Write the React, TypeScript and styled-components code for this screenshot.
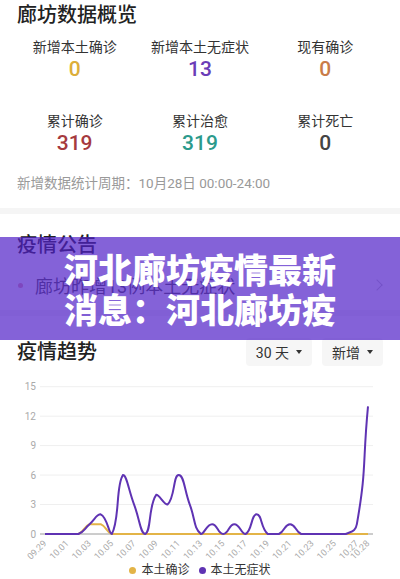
import React from 'react';
import styled, { createGlobalStyle } from 'styled-components';

const GlobalStyle = createGlobalStyle`
  html, body { margin: 0; padding: 0; background: #fff; }
  body {
    font-family: Roboto, "Noto Sans CJK SC", sans-serif;
    color: #222;
    width: 400px;
    height: 579px;
    overflow: hidden;
  }
  * { box-sizing: border-box; }
`;

const Page = styled.div`
  position: relative;
  width: 400px;
  height: 579px;
  overflow: hidden;
  background: #fff;
`;

const Section = styled.section<{ $pt?: number; $pb?: number }>`
  padding: ${(p) => p.$pt ?? 0}px 17px ${(p) => p.$pb ?? 0}px;
`;

const SectionTitle = styled.h2`
  margin: 0;
  font-size: 20px;
  line-height: 31px;
  font-weight: 500;
  color: #222;
`;

const StatsGrid = styled.div`
  margin: 7px -5px 0;
  display: grid;
  grid-template-columns: repeat(3, 1fr);
  row-gap: 30px;
`;

const StatCell = styled.div`
  display: flex;
  flex-direction: column;
  align-items: center;
`;

const StatLabel = styled.div`
  font-size: 14px;
  line-height: 18px;
  color: #333;
`;

const StatValue = styled.div<{ $color: string }>`
  font-size: 21px;
  line-height: 26px;
  font-weight: 500;
  color: ${(p) => p.$color};
`;

const Footnote = styled.div`
  margin-top: 17px;
  font-size: 13.5px;
  line-height: 20px;
  color: #999;
`;

const Divider = styled.div<{ $mt?: number }>`
  margin-top: ${(p) => p.$mt ?? 0}px;
  height: 6px;
  background: #f5f5f5;
`;

const NoticeRow = styled.div`
  margin-top: 9px;
  height: 30px;
  display: flex;
  align-items: center;
`;

const Bullet = styled.span`
  width: 5px;
  height: 5px;
  border-radius: 50%;
  background: #e9a0a8;
  margin-left: 1px;
  flex: none;
`;

const NoticeText = styled.span`
  margin-left: 12px;
  font-size: 18px;
  color: #555;
  flex: 1;
  white-space: nowrap;
`;

const Chevron = styled.span`
  width: 8px;
  height: 8px;
  border-top: 1.5px solid #c8c8c8;
  border-right: 1.5px solid #c8c8c8;
  transform: rotate(45deg);
  margin-right: 2px;
  flex: none;
`;

const TrendHeader = styled.div`
  display: flex;
  align-items: center;
  height: 28px;
`;

const TrendTitle = styled(SectionTitle)`
  flex: 1;
  line-height: 28px;
`;

const Dropdowns = styled.div`
  display: flex;
  gap: 10px;
`;

const DropButton = styled.div`
  height: 28px;
  padding: 0 10px;
  display: flex;
  align-items: center;
  gap: 7px;
  background: #f6f6f6;
  border-radius: 4px;
  font-size: 14px;
  color: #333;
`;

const Caret = styled.span`
  width: 0;
  height: 0;
  border-left: 3.5px solid transparent;
  border-right: 3.5px solid transparent;
  border-top: 4.5px solid #333;
`;

const ChartSvg = styled.svg`
  display: block;
  margin-top: 6px;
`;

const Legend = styled.div`
  height: 16px;
  display: flex;
  justify-content: center;
  align-items: center;
  gap: 9px;
`;

const LegendItem = styled.div`
  display: flex;
  align-items: center;
  gap: 5px;
  font-size: 12px;
  line-height: 16px;
  color: #333;
`;

const LegendDot = styled.span<{ $color: string }>`
  width: 7px;
  height: 7px;
  border-radius: 50%;
  background: ${(p) => p.$color};
`;

const Banner = styled.div`
  position: absolute;
  left: 0;
  right: 0;
  top: 237px;
  height: 103px;
  background: rgba(80, 32, 200, 0.7);
  display: flex;
  flex-direction: column;
  align-items: center;
  justify-content: center;
`;

const BannerLine = styled.div`
  font-family: "Noto Sans CJK SC", sans-serif;
  font-size: 34px;
  line-height: 40px;
  font-weight: 900;
  color: #fff;
  white-space: nowrap;
`;

const ORANGE = '#e3b447';
const PURPLE = '#5f33b3';

const purpleData = [0, 0, 0, 0, 1, 2, 0, 6, 3, 0, 4, 3, 6, 3, 0, 1, 0, 1, 0, 2, 0, 0, 1, 0, 0, 0, 0, 0, 1, 13];
const orangeData = purpleData.map((_, i) => (i === 4 || i === 5 ? 1 : 0));

const startDate = new Date(2020, 8, 29);
const dates = purpleData.map((_, i) => {
  const d = new Date(startDate.getTime() + i * 86400000);
  const mm = String(d.getMonth() + 1).padStart(2, '0');
  const dd = String(d.getDate()).padStart(2, '0');
  return `${mm}.${dd}`;
});

const X0 = 45;
const X1 = 368;
const STEP = (X1 - X0) / 29;
const Y0 = 162;
const UNIT = (162 - 14.7) / 15;
const xAt = (i: number) => X0 + i * STEP;
const yAt = (v: number) => Y0 - v * UNIT;

function smoothPath(values: number[], smooth = 0.5): string {
  const pts = values.map((v, i) => [xAt(i), yAt(v)] as [number, number]);
  const n = pts.length;
  const nextCp: [number, number][] = [];
  const prevCp: [number, number][] = [];
  const clamp = (v: number, a: number, b: number) => Math.min(Math.max(v, Math.min(a, b)), Math.max(a, b));
  for (let i = 0; i < n; i++) {
    const [x, y] = pts[i];
    const [px, py] = pts[i - 1] ?? pts[i];
    const [nx, ny] = pts[i + 1] ?? pts[i];
    const vx = nx - px;
    const vy = ny - py;
    const lp = Math.hypot(x - px, y - py);
    const ln = Math.hypot(nx - x, ny - y);
    const ratio = lp + ln === 0 ? 0.5 : ln / (lp + ln);
    nextCp.push([clamp(x + vx * smooth * ratio, x, nx), clamp(y + vy * smooth * ratio, y, ny)]);
    prevCp.push([clamp(x - vx * smooth * (1 - ratio), x, px), clamp(y - vy * smooth * (1 - ratio), y, py)]);
  }
  let d = `M${pts[0][0].toFixed(2)},${pts[0][1].toFixed(2)}`;
  for (let i = 0; i < n - 1; i++) {
    const a = nextCp[i];
    const b = prevCp[i + 1];
    const p = pts[i + 1];
    d += ` C${a[0].toFixed(2)},${a[1].toFixed(2)} ${b[0].toFixed(2)},${b[1].toFixed(2)} ${p[0].toFixed(2)},${p[1].toFixed(2)}`;
  }
  return d;
}

const labelIdx = [0, 2, 4, 6, 8, 10, 12, 14, 16, 18, 20, 22, 24, 26, 28, 29];

const TrendChart: React.FC = () => (
  <ChartSvg width={400} height={190} viewBox="0 0 400 190">
    {[15, 12, 9, 6, 3].map((v) => (
      <line key={v} x1={40} x2={373} y1={yAt(v)} y2={yAt(v)} stroke="#efefef" strokeWidth={1} />
    ))}
    <line x1={40} x2={373} y1={Y0} y2={Y0} stroke="#9a9a9a" strokeWidth={1} />
    {[15, 12, 9, 6, 3, 0].map((v) => (
      <text
        key={v}
        x={36}
        y={yAt(v)}
        textAnchor="end"
        dominantBaseline="central"
        fontSize={10}
        fill="#aaa"
        fontFamily="Roboto, sans-serif"
      >
        {v}
      </text>
    ))}
    {labelIdx.map((i) => {
      const x = xAt(i) + 2;
      const y = 172;
      return (
        <text
          key={i}
          x={x}
          y={y}
          textAnchor="end"
          fontSize={9}
          fill="#aaa"
          fontFamily="Roboto, sans-serif"
          transform={`rotate(-45 ${x} ${y})`}
        >
          {dates[i]}
        </text>
      );
    })}
    <path d={smoothPath(orangeData)} fill="none" stroke={ORANGE} strokeWidth={2} />
    <path d={smoothPath(purpleData)} fill="none" stroke={PURPLE} strokeWidth={2} />
  </ChartSvg>
);

const stats = [
  { label: '新增本土确诊', value: '0', color: '#dcae3a' },
  { label: '新增本土无症状', value: '13', color: '#6a3db8' },
  { label: '现有确诊', value: '0', color: '#c97c48' },
  { label: '累计确诊', value: '319', color: '#a63a3e' },
  { label: '累计治愈', value: '319', color: '#2b9a8c' },
  { label: '累计死亡', value: '0', color: '#444' },
];

export default function App() {
  return (
    <Page>
      <GlobalStyle />
      <Section>
        <SectionTitle>廊坊数据概览</SectionTitle>
        <StatsGrid>
          {stats.map((s) => (
            <StatCell key={s.label}>
              <StatLabel>{s.label}</StatLabel>
              <StatValue $color={s.color}>{s.value}</StatValue>
            </StatCell>
          ))}
        </StatsGrid>
        <Footnote>新增数据统计周期：10月28日 00:00-24:00</Footnote>
      </Section>
      <Divider $mt={15} />
      <Section $pt={16} $pb={10}>
        <SectionTitle>疫情公告</SectionTitle>
        <NoticeRow>
          <Bullet />
          <NoticeText>廊坊昨增13例本土无症状</NoticeText>
          <Chevron />
        </NoticeRow>
      </Section>
      <Divider />
      <Section $pt={22}>
        <TrendHeader>
          <TrendTitle>疫情趋势</TrendTitle>
          <Dropdowns>
            <DropButton>
              30 天<Caret />
            </DropButton>
            <DropButton>
              新增<Caret />
            </DropButton>
          </Dropdowns>
        </TrendHeader>
      </Section>
      <TrendChart />
      <Legend>
        <LegendItem>
          <LegendDot $color={ORANGE} />
          本土确诊
        </LegendItem>
        <LegendItem>
          <LegendDot $color={PURPLE} />
          本土无症状
        </LegendItem>
      </Legend>
      <Banner>
        <BannerLine>河北廊坊疫情最新</BannerLine>
        <BannerLine>消息：河北廊坊疫</BannerLine>
      </Banner>
    </Page>
  );
}
